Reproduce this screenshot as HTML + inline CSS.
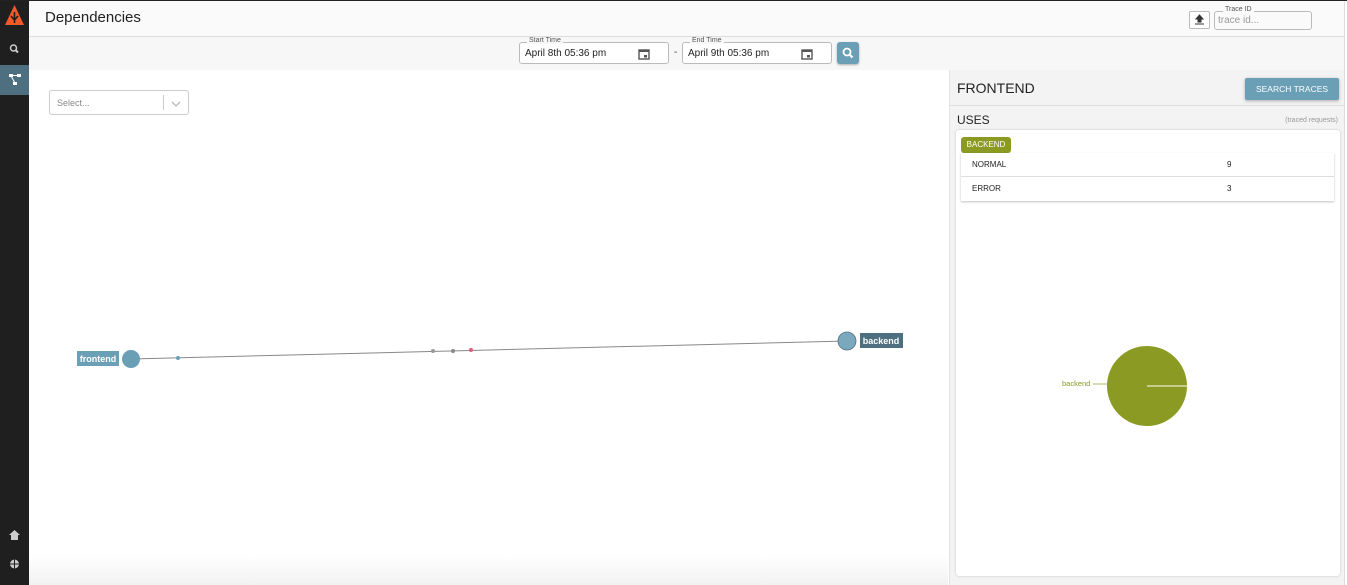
<!DOCTYPE html>
<html><head><meta charset="utf-8"><style>
*{box-sizing:border-box;margin:0;padding:0}
body{width:1347px;height:585px;overflow:hidden;font-family:"Liberation Sans",sans-serif;background:#fff;position:relative}
.topline{position:absolute;left:0;top:0;width:1347px;height:1px;background:#222;z-index:5}
.side{position:absolute;left:0;top:0;width:29px;height:585px;background:#1f1f1f}
.hdr{position:absolute;left:29px;top:0;right:3px;height:37px;background:#fafafa;border-bottom:1px solid #ddd}
.hdr h1{font-weight:normal;font-size:15px;color:#222;position:absolute;left:16px;top:9px}
.tool{position:absolute;left:29px;top:37px;right:3px;height:33px;background:#f7f7f7}
.fld{position:absolute;border:1px solid #bbb;border-radius:3px;height:22px;background:#fff;font-size:10px;color:#222;padding:5px 5px}
.lbl{position:absolute;top:-6px;left:7px;font-size:7px;color:#555;background:#f7f7f7;padding:0 2px}
.main{position:absolute;left:29px;top:70px;width:919px;height:515px;background:#fff}
.rp{position:absolute;left:949px;top:70px;width:395px;height:515px;background:#f3f3f3;border-left:1px solid #e2e2e2}
.rr{position:absolute;right:0;top:0;width:3px;height:585px;background:#fff;border-left:1px solid #ddd}
</style></head><body>
<div class="topline"></div>
<div class="side">
<svg width="29" height="30" style="position:absolute;left:0;top:3px"><path d="M14.5 2 L24 22 L5 22Z" fill="#f05a28"/><path d="M14.5 9 L14.5 20 M11 13 L14.5 17 L18 13" stroke="#1f1f1f" stroke-width="1.6" fill="none"/></svg>
<svg width="29" height="14" style="position:absolute;left:0;top:42px"><circle cx="13.5" cy="6" r="3" stroke="#ccc" stroke-width="1.5" fill="none"/><path d="M15.5 8 L18 10.5" stroke="#ccc" stroke-width="2"/></svg>
<div style="position:absolute;left:0;top:65px;width:29px;height:30px;background:#4e6f80"><svg width="29" height="30"><rect x="9" y="9" width="4" height="3" fill="#fff"/><rect x="17" y="9" width="4" height="3" fill="#fff"/><rect x="13" y="17" width="4" height="3" fill="#fff"/><path d="M11 11 L15 18 M13 10.5 L17 10.5" stroke="#fff"/></svg></div>
<svg width="29" height="12" style="position:absolute;left:0;top:529px"><path d="M9 6 L14.5 1 L20 6 L18 6 L18 11 L11 11 L11 6Z" fill="#ccc"/></svg>
<svg width="29" height="12" style="position:absolute;left:0;top:558px"><circle cx="14.5" cy="6" r="4.5" fill="#ccc"/><path d="M10 6 H19 M14.5 1.5 V10.5" stroke="#1f1f1f" stroke-width="1"/></svg>
</div>
<div class="hdr"><h1>Dependencies</h1>
<div style="position:absolute;left:1160px;top:11px;width:21px;height:18px;border:1px solid #bbb;border-radius:2px;background:#fff"><svg width="19" height="16"><path d="M9.5 3 L6 7 H8 V10 H11 V7 H13Z M5 12 H14" stroke="#333" fill="#333" stroke-width="1"/></svg></div>
<div class="fld" style="left:1185px;top:11px;width:98px;height:19px;padding:3px 3px;color:#999;font-size:10px;background:#fafafa"><span class="lbl" style="left:8px;background:#fafafa">Trace ID</span>trace id...</div>
</div>
<div class="tool">
<div class="fld" style="left:490px;top:5px;width:150px"><span class="lbl">Start Time</span>April 8th 05:36 pm<svg width="12" height="12" style="position:absolute;right:18px;top:5px"><rect x="1" y="2" width="10" height="9" fill="none" stroke="#555" stroke-width="1.4"/><rect x="1" y="2" width="10" height="2" fill="#555"/><rect x="6" y="7" width="3" height="2.5" fill="#555"/></svg></div>
<span style="position:absolute;left:645px;top:10px;font-size:10px;color:#444">-</span>
<div class="fld" style="left:653px;top:5px;width:150px"><span class="lbl">End Time</span>April 9th 05:36 pm<svg width="12" height="12" style="position:absolute;right:18px;top:5px"><rect x="1" y="2" width="10" height="9" fill="none" stroke="#555" stroke-width="1.4"/><rect x="1" y="2" width="10" height="2" fill="#555"/><rect x="6" y="7" width="3" height="2.5" fill="#555"/></svg></div>
<div style="position:absolute;left:808px;top:5px;width:22px;height:22px;border-radius:3px;background:#6a9fb5;box-shadow:0 1px 2px rgba(0,0,0,.3)"><svg width="22" height="22"><circle cx="10" cy="10" r="3.5" stroke="#fff" stroke-width="1.8" fill="none"/><path d="M12.5 12.5 L15.5 15.5" stroke="#fff" stroke-width="2.2"/></svg></div>
</div>
<div class="main">
<div style="position:absolute;left:20px;top:20px;width:140px;height:25px;border:1px solid #ccc;border-radius:3px;font-size:9px;color:#888;padding:7px 7px">Select...<span style="position:absolute;left:113px;top:4px;width:1px;height:15px;background:#ccc"></span><svg width="10" height="8" style="position:absolute;left:121px;top:9px"><path d="M1 2 L5 6 L9 2" stroke="#bbb" fill="none" stroke-width="1.3"/></svg></div>
<svg width="919" height="515" style="position:absolute;left:0;top:0">
<line x1="102" y1="289" x2="818" y2="271" stroke="#888" stroke-width="1"/>
<circle cx="149" cy="288" r="2" fill="#6a9fb5"/><circle cx="404" cy="281" r="2" fill="#999"/><circle cx="424" cy="281" r="2" fill="#888"/><circle cx="442" cy="280" r="2" fill="#e05c7a"/>
<circle cx="102" cy="289" r="9" fill="#6a9fb5"/>
<circle cx="818" cy="271" r="9" fill="#7aa8bd" stroke="#4e6f80" stroke-width="0.8"/>
<rect x="48" y="281" width="42" height="15" fill="#6a9fb5"/><text x="69" y="292" font-size="9" fill="#fff" text-anchor="middle" font-family="Liberation Sans" font-weight="bold">frontend</text>
<rect x="831" y="263" width="43" height="15" fill="#4e6f80"/><text x="852" y="274" font-size="9" fill="#fff" text-anchor="middle" font-family="Liberation Sans" font-weight="bold">backend</text>
</svg>
<div style="position:absolute;left:0;bottom:0;width:919px;height:30px;background:linear-gradient(#fff,#f2f2f2)"></div>
</div>
<div class="rp">
<div style="position:absolute;left:7px;top:10px;font-size:14px;color:#222">FRONTEND</div>
<div style="position:absolute;left:295px;top:8px;width:94px;height:22px;background:#6a9fb5;border-radius:2px;box-shadow:0 1px 3px rgba(0,0,0,.3);color:#fff;font-size:8.5px;text-align:center;line-height:22px">SEARCH TRACES</div>
<div style="position:absolute;left:0;top:35px;width:395px;border-top:1px solid #ddd"></div>
<div style="position:absolute;left:7px;top:43px;font-size:12px;color:#222">USES</div>
<div style="position:absolute;right:6px;top:47px;font-size:7px;color:#999">(traced requests)</div>
<div style="position:absolute;left:6px;top:60px;width:384px;height:446px;background:#fff;border-radius:3px;box-shadow:0 0 2px rgba(0,0,0,.2)">
<div style="position:absolute;left:5px;top:7px;width:50px;height:16px;background:#8a9a22;border-radius:3px;color:#fff;font-size:8px;line-height:16px;text-align:center">BACKEND</div>
<div style="position:absolute;left:5px;top:23px;width:373px;height:48px;background:#fff;box-shadow:0 1px 2px rgba(0,0,0,.25);font-size:8px;color:#222">
<div style="height:24px;border-bottom:1px solid #ddd;position:relative"><span style="position:absolute;left:11px;top:7px">NORMAL</span><span style="position:absolute;left:266px;top:7px">9</span></div>
<div style="height:24px;position:relative"><span style="position:absolute;left:11px;top:7px">ERROR</span><span style="position:absolute;left:266px;top:7px">3</span></div>
</div>
<svg width="384" height="446" style="position:absolute;left:0;top:0"><circle cx="191" cy="256" r="40" fill="#8a9a22"/><line x1="191" y1="256" x2="231" y2="256" stroke="#fff"/><line x1="137" y1="254" x2="152" y2="254" stroke="#8a9a22" stroke-width=".7"/><text x="106" y="256" font-size="7.5" fill="#8a9a22" font-family="Liberation Sans">backend</text></svg>
</div>
</div>
<div class="rr"></div>
</body></html>
